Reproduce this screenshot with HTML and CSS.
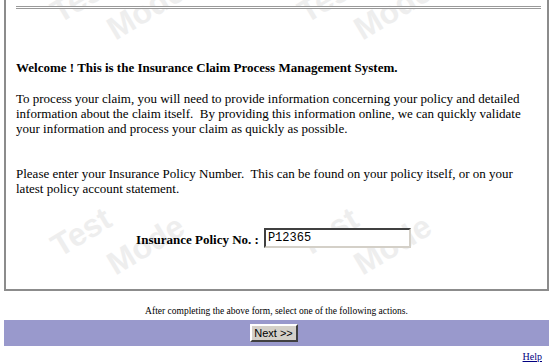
FILE: index.html
```html
<!DOCTYPE html>
<html>
<head>
    <title>Insurance Claim Process Management System</title>
    <link rel="stylesheet" href="styles.css">
</head>
<body>
    <div class="panel">
        <div class="watermarks">
            <span class="wm wm-test" style="left: 56px; top: -4px;">Test</span>
            <span class="wm wm-mode" style="left: 112px; top: 13px;">Mode</span>
            <span class="wm wm-test" style="left: 303px; top: -4px;">Test</span>
            <span class="wm wm-mode" style="left: 359px; top: 13px;">Mode</span>
            <span class="wm wm-test" style="left: 56px; top: 230px;">Test</span>
            <span class="wm wm-mode" style="left: 112px; top: 248px;">Mode</span>
            <span class="wm wm-test" style="left: 303px; top: 230px;">Test</span>
            <span class="wm wm-mode" style="left: 359px; top: 248px;">Mode</span>
        </div>

        <hr class="rule">

        <p class="welcome">Welcome ! This is the Insurance Claim Process Management System.</p>

        <p class="intro">To process your claim, you will need to provide information concerning your policy and detailed information about the claim itself.&nbsp; By providing this information online, we can quickly validate your information and process your claim as quickly as possible.</p>

        <p class="prompt">Please enter your Insurance Policy Number.&nbsp; This can be found on your policy itself, or on your latest policy account statement.</p>

        <div class="policy-row">
            <label class="policy-label" for="policy-no">Insurance Policy No. :</label>
            <input type="text" id="policy-no" class="policy-input" value="P12365">
        </div>
    </div>

    <p class="actions-note">After completing the above form, select one of the following actions.</p>

    <div class="action-bar">
        <button class="action-button">Next &gt;&gt;</button>
    </div>

    <div class="help-row">
        <a href="#" class="help-link">Help</a>
    </div>
</body>
</html>
```

FILE: styles.css
```css
body {
    margin: 0 4px;
    font-family: "Liberation Serif", "Times New Roman", serif;
    font-size: 13px;
    line-height: 15px;
    color: #000;
    background: #fff;
}
.panel {
    position: relative;
    overflow: hidden;
    border: 2px solid #8c8c8c;
    border-top: none;
    padding: 6px 6px 41px 10px;
}
.watermarks {
    position: absolute;
    left: 0;
    top: 0;
    right: 0;
    bottom: 0;
}
.wm {
    position: absolute;
    font-family: "Liberation Sans", Arial, sans-serif;
    font-weight: bold;
    font-size: 32px;
    line-height: 32px;
    color: #eeeeee;
    transform: rotate(-31deg);
    transform-origin: left bottom;
}
.rule {
    position: relative;
    margin: 0;
    border: none;
    border-top: 1px solid #9a9a9a;
    border-bottom: 1px solid #9a9a9a;
    height: 1px;
    background: #fff;
}
.welcome, .intro, .prompt, .policy-row {
    position: relative;
}
.welcome {
    margin: 51px 0 0 0;
    font-weight: bold;
}
.intro {
    margin: 16px 0 0 0;
}
.prompt {
    margin: 30px 0 0 0;
}
.policy-row {
    display: flex;
    justify-content: center;
    align-items: center;
    gap: 5px;
    margin-top: 32px;
    padding-right: 10px;
}
.policy-label {
    font-weight: bold;
    padding-top: 3px;
}
.policy-input {
    box-sizing: border-box;
    width: 147px;
    height: 20px;
    margin: 0;
    padding: 0 2px;
    border: 2px solid;
    border-color: #404040 #d4d0c8 #d4d0c8 #404040;
    font-family: "Liberation Mono", "Courier New", monospace;
    font-size: 12px;
    background: #fff;
}
.actions-note {
    margin: 15px 0 0 0;
    text-align: center;
    font-size: 9.5px;
    line-height: 11px;
}
.action-bar {
    margin-top: 3px;
    height: 26px;
    background-color: #9999cc;
    display: flex;
    justify-content: center;
    align-items: flex-start;
    padding-top: 4px;
    padding-right: 6px;
    box-sizing: border-box;
}
.action-button {
    box-sizing: border-box;
    width: 48px;
    height: 18px;
    padding: 0;
    background: #d4d0c8;
    border: 2px solid;
    border-color: #fff #404040 #404040 #fff;
    font-family: "Liberation Sans", Arial, sans-serif;
    font-size: 11px;
    color: #000;
    cursor: pointer;
}
.help-row {
    text-align: right;
    padding-right: 7px;
    margin-top: 2px;
}
.help-link {
    font-size: 10px;
    color: #000080;
}
```
